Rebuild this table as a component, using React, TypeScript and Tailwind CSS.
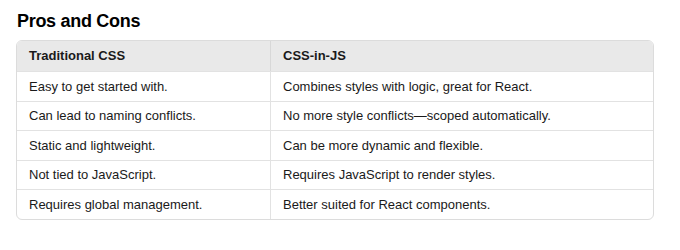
export default function App() {
  const rows: [string, string][] = [
    ["Easy to get started with.", "Combines styles with logic, great for React."],
    ["Can lead to naming conflicts.", "No more style conflicts\u2014scoped automatically."],
    ["Static and lightweight.", "Can be more dynamic and flexible."],
    ["Not tied to JavaScript.", "Requires JavaScript to render styles."],
    ["Requires global management.", "Better suited for React components."],
  ];
  return (
    <div
      className="w-[680px] h-[250px] bg-white text-[#1a1a1a] px-4 pt-[10px]"
      style={{ fontFamily: '"Liberation Sans", Arial, sans-serif' }}
    >
      <h2 className="text-[18px] font-bold leading-[22px] tracking-[-0.3px] text-black pl-px">Pros and Cons</h2>
      <div className="mt-[8px] w-[638px] border border-[#dcdcdc] rounded-[6px] overflow-hidden">
        <div className="grid grid-cols-[254px_1fr] bg-[#e9e9e9] h-[30px] items-stretch text-[13px] font-bold">
          <div className="px-3 flex items-center border-r border-[#d8d8d8]">Traditional CSS</div>
          <div className="px-3 flex items-center">CSS-in-JS</div>
        </div>
        {rows.map(([a, b], i) => (
          <div key={i} className="grid grid-cols-[254px_1fr] h-[29.6px] text-[13px] border-t border-[#e2e2e2]">
            <div className="px-3 flex items-center border-r border-[#e2e2e2]">{a}</div>
            <div className="px-3 flex items-center">{b}</div>
          </div>
        ))}
      </div>
    </div>
  );
}
